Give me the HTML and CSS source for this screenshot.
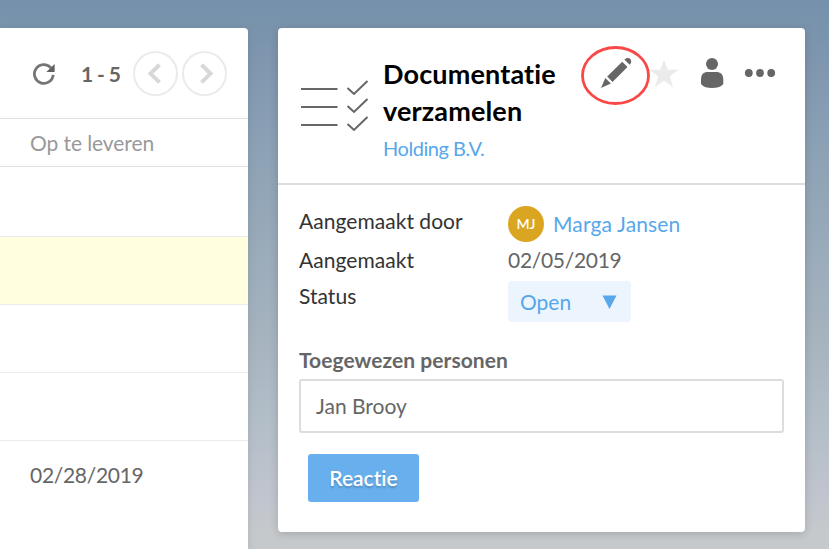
FILE: index.html
```html
<!DOCTYPE html>
<html lang="nl">
<head>
<meta charset="utf-8">
<title>Documentatie verzamelen</title>
<link rel="stylesheet" href="styles.css">
</head>
<body>
<div class="app">
  <section class="list">
    <div class="toolbar">
      <svg class="refresh" width="24" height="24" viewBox="0 0 24 24"><path d="M21.2 13.800a9.4 9.4 0 1 1-2.3-7" fill="none" stroke="#757575" stroke-width="2.800"/><path d="M22.6 3v8h-8.200z" fill="#606060"/></svg>
      <span class="range">1 - 5</span>
      <button class="pager" aria-label="Vorige"><svg width="42" height="42" viewBox="0 0 42 42"><path d="M24.5 11.8 15.5 20.6l9 8.8" fill="none" stroke="#d8d8d8" stroke-width="4"/></svg></button>
      <button class="pager" aria-label="Volgende"><svg width="42" height="42" viewBox="0 0 42 42"><path d="m17.5 11.8 9 8.8-9 8.8" fill="none" stroke="#d8d8d8" stroke-width="4"/></svg></button>
    </div>
    <div class="column-head">Op te leveren</div>
    <div class="row first"></div>
    <div class="row selected"></div>
    <div class="row"></div>
    <div class="row"></div>
    <div class="row last">02/28/2019</div>
  </section>

  <section class="card">
    <header class="card-head">
      <svg class="checklist" width="70" height="56" viewBox="0 0 70 56" fill="none" stroke="#666" stroke-width="2"><path d="M1 12h36.500M1 30h36.500M1 48h36.500"/><path d="m47.500 11 6.500 6L67.500 4M47.500 29l6.500 6L67.500 22M47.500 47l6.500 6L67.500 40"/></svg>
      <div class="heading">
        <h1>Documentatie verzamelen</h1>
        <a class="company">Holding B.V.</a>
      </div>
      <div class="actions">
        <svg width="229" height="64" viewBox="576 42 229 64">
          <g fill="#666">
            <path d="M601 88l4.300-10 5.600 5.500z"/>
            <path d="M607.200 76.500l15-14.700 5.300 5.300-15 14.800z"/>
            <path d="M624.300 59.500c2.200-2.100 4.700-2 6-.6 1.300 1.400 1.300 3.800-.6 5.800z"/>
            <circle cx="712" cy="64" r="6"/>
            <path d="M701 80c0-6 2.500-8 7-8h8c4.500 0 7.300 2 7.300 8v4c-2.500 3-6.500 4-11.300 4s-8.500-1-11-4z"/>
            <circle cx="748.800" cy="73" r="3.900"/><circle cx="760" cy="73" r="3.900"/><circle cx="771.200" cy="73" r="3.900"/>
          </g>
          <path fill="#ebebeb" d="m664 59.500 3.500 10.300H678.500l-8.700 6.500 3.200 10.900-9-6.500-9 6.500 3.200-10.900-8.700-6.500h11z"/>
          <ellipse cx="615.500" cy="75.500" rx="33" ry="28" fill="none" stroke="#f94848" stroke-width="2.800"/>
        </svg>
      </div>
    </header>
    <div class="details">
      <span class="label maker">Aangemaakt door</span>
      <span class="person"><span class="avatar">MJ</span><a>Marga Jansen</a></span>
      <span class="label created">Aangemaakt</span>
      <span class="date">02/05/2019</span>
      <span class="label status">Status</span>
      <button class="select">Open<svg width="15" height="15" viewBox="0 0 15 15"><path fill="#57a7ea" d="M.5.500h14L7.500 14z"/></svg></button>
    </div>
    <div class="assignees">
      <div class="assign-label">Toegewezen personen</div>
      <div class="field">Jan Brooy</div>
      <button class="reply">Reactie</button>
    </div>
  </section>
</div>
</body>
</html>
```
FILE: styles.css
```css
* { box-sizing: border-box; }
body {
  margin: 0;
  font-family: Lato, "Liberation Sans", sans-serif;
  font-size: 21px;
  font-variant-ligatures: none;
  color: #666;
}
button { font: inherit; font-variant-ligatures: none; border: 0; padding: 0; }
.app {
  height: 549px;
  padding-top: 28px;
  display: flex;
  align-items: flex-start;
  gap: 30px;
  overflow: hidden;
  background: linear-gradient(#7591ab 0, #7f96af 60px, #8da2b5 155px, #a4b2be 325px, #b3bec8 425px, #c0c4ce 495px, #c5c9cc 530px, #c5c9cc 549px);
}
.list {
  width: 248px;
  height: 521px;
  background: #fff;
  border-top-right-radius: 4px;
  box-shadow: 0 2px 8px rgba(0,0,0,.1);
}
.toolbar {
  height: 91px;
  padding-left: 32px;
  display: flex;
  align-items: center;
  border-bottom: 1px solid #e2e2e2;
}
.range { font-weight: 700; width: 52px; margin-left: 25px; white-space: nowrap; letter-spacing: -.6px; }
.pager {
  width: 45px;
  height: 45px;
  border: 2px solid #ebebeb;
  border-radius: 50%;
  background: #fff;
}
.pager + .pager { margin-left: 4px; }
.pager svg { display: block; }
.column-head { height: 48px; padding-left: 30px; line-height: 48px; color: #999; letter-spacing: -.08px; border-bottom: 1px solid #e2e2e2; }
.row { height: 68px; padding-left: 30px; line-height: 68px; border-bottom: 1px solid #ebebeb; }
.row.first { height: 70px; }
.row.selected { background: #ffffdf; }
.row.last { border-bottom: 0; letter-spacing: -.3px; }
.card {
  width: 527px;
  height: 504px;
  background: #fff;
  border-radius: 4px;
  box-shadow: 0 2px 8px rgba(0,0,0,.16);
}
.card-head {
  height: 157px;
  display: flex;
  border-bottom: 2px solid #ddd;
}
.checklist { margin: 49px 0 0 22px; flex: none; }
.heading { width: 193px; margin: 27px 0 0 13px; flex: none; }
h1 { margin: 0; font-size: 27px; line-height: 37px; font-weight: 700; letter-spacing: .15px; color: #000; }
.company { display: block; font-size: 20px; line-height: 38px; letter-spacing: -.45px; color: #57a7ea; }
.actions { margin-top: 14px; }
.details {
  margin: 20px 21px 0;
  display: grid;
  grid-template-columns: 209px auto;
  grid-template-rows: 38px 37px 42px;
  align-items: center;
  justify-content: start;
}
.label { color: #333; letter-spacing: .04px; }
.maker { margin-top: -8px; }
.created { margin-top: -5px; }
.date { margin-top: -5px; letter-spacing: -.3px; }
.status { margin-top: -12px; }
.person { display: flex; align-items: center; gap: 9px; color: #57a7ea; }
.person a { margin-top: -2px; letter-spacing: .15px; }
.avatar {
  width: 36px;
  height: 36px;
  border-radius: 50%;
  background: #daa520;
  color: #fff;
  font-size: 14px;
  font-weight: 600;
  line-height: 36px;
  text-align: center;
}
.select {
  width: 123px;
  height: 41px;
  padding: 0 14px 0 12px;
  display: flex;
  align-items: center;
  justify-content: space-between;
  border-radius: 4px;
  background: #ecf5fd;
  color: #57a7ea;
}
.select svg { margin-top: 3px; }
.assignees { padding: 22px 21px 0; }
.assign-label { height: 35px; line-height: 32px; font-weight: 700; letter-spacing: .05px; }
.field { height: 54px; border: 2px solid #ddd; border-radius: 3px; padding-left: 15px; line-height: 50px; }
.reply {
  display: block;
  width: 111px;
  height: 48px;
  margin: 21px 0 0 9px;
  padding-bottom: 2px;
  border-radius: 3px;
  background: #68b0ed;
  color: #fff;
  font-weight: 600;
  text-shadow: 0 2px 2px rgba(0,0,0,.2);
}
```
